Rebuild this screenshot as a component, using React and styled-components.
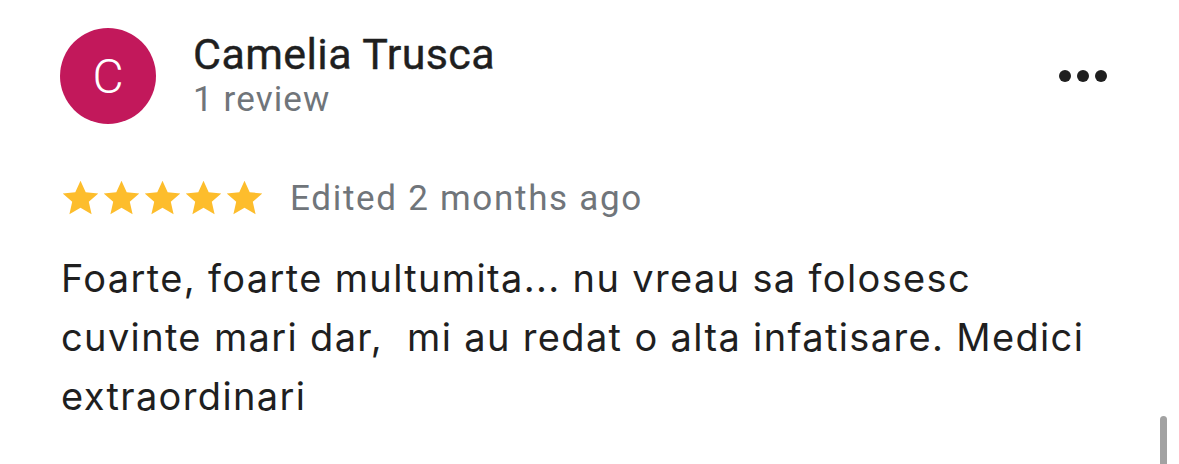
import React from "react";
import styled, { createGlobalStyle } from "styled-components";

const GlobalStyle = createGlobalStyle`
  html, body {
    margin: 0;
    padding: 0;
    background: #ffffff;
  }
  body {
    width: 1179px;
    height: 464px;
    overflow: hidden;
  }
`;

const Page = styled.div`
  position: relative;
  width: 1179px;
  height: 464px;
  box-sizing: border-box;
  padding: 28px 0 0 60px;
  background: #fff;
`;

const Header = styled.div`
  display: flex;
  align-items: flex-start;
`;

const Avatar = styled.div`
  width: 96px;
  height: 96px;
  border-radius: 50%;
  background: #c2185b;
  color: #fff;
  display: flex;
  align-items: center;
  justify-content: center;
  font-family: Roboto, "Liberation Sans", sans-serif;
  font-size: 48px;
  font-weight: 300;
  flex-shrink: 0;
`;

const Who = styled.div`
  margin-left: 37px;
  display: flex;
  flex-direction: column;
  font-family: Roboto, "Liberation Sans", sans-serif;
`;

const Name = styled.div`
  font-size: 43px;
  font-weight: 400;
  letter-spacing: 0.4px;
  color: #1f1f1f;
  line-height: 52px;
  -webkit-text-stroke: 0.4px #1f1f1f;
`;

const Count = styled.div`
  font-size: 35px;
  letter-spacing: 1.1px;
  color: #70757a;
  line-height: 40px;
`;

const More = styled.div`
  margin-left: auto;
  margin-right: 72px;
  margin-top: 42px;
  display: flex;
  gap: 6px;
`;

const Dot = styled.span`
  width: 12px;
  height: 12px;
  border-radius: 50%;
  background: #1f1f1f;
`;

const RatingRow = styled.div`
  display: flex;
  align-items: center;
  margin-top: 54px;
`;

const Stars = styled.div`
  display: flex;
`;

const Meta = styled.span`
  margin-left: 25px;
  font-family: Roboto, "Liberation Sans", sans-serif;
  font-size: 35px;
  letter-spacing: 1.7px;
  color: #70757a;
`;

const Body = styled.p`
  margin: 30px 0 0 1px;
  width: 1110px;
  font-family: Inter, "Noto Sans", sans-serif;
  font-size: 38px;
  letter-spacing: 1.35px;
  line-height: 59px;
  color: #1f1f1f;
  white-space: pre-wrap;
`;

const Scrollbar = styled.div`
  position: absolute;
  left: 1160px;
  top: 416px;
  width: 7px;
  height: 60px;
  border-radius: 4px;
  background: #a2a2a2;
`;

const Star = () => (
  <svg width="41" height="41" viewBox="0 0 24 24">
    <path
      fill="#fdbd2c"
      d="M12 1.6l3.05 6.75 7.35.7-5.55 4.9 1.65 7.25L12 17.4l-6.5 3.8 1.65-7.25L1.6 9.05l7.35-.7z"
    />
  </svg>
);

export default function App() {
  return (
    <Page>
      <GlobalStyle />
      <Header>
        <Avatar>C</Avatar>
        <Who>
          <Name>Camelia Trusca</Name>
          <Count>1 review</Count>
        </Who>
        <More>
          <Dot />
          <Dot />
          <Dot />
        </More>
      </Header>
      <RatingRow>
        <Stars>
          {[0, 1, 2, 3, 4].map((i) => (
            <Star key={i} />
          ))}
        </Stars>
        <Meta>Edited 2 months ago</Meta>
      </RatingRow>
      <Body>
        {"Foarte, foarte multumita... nu vreau sa folosesc\ncuvinte mari dar,  mi au redat o alta infatisare. Medici\nextraordinari"}
      </Body>
      <Scrollbar />
    </Page>
  );
}
